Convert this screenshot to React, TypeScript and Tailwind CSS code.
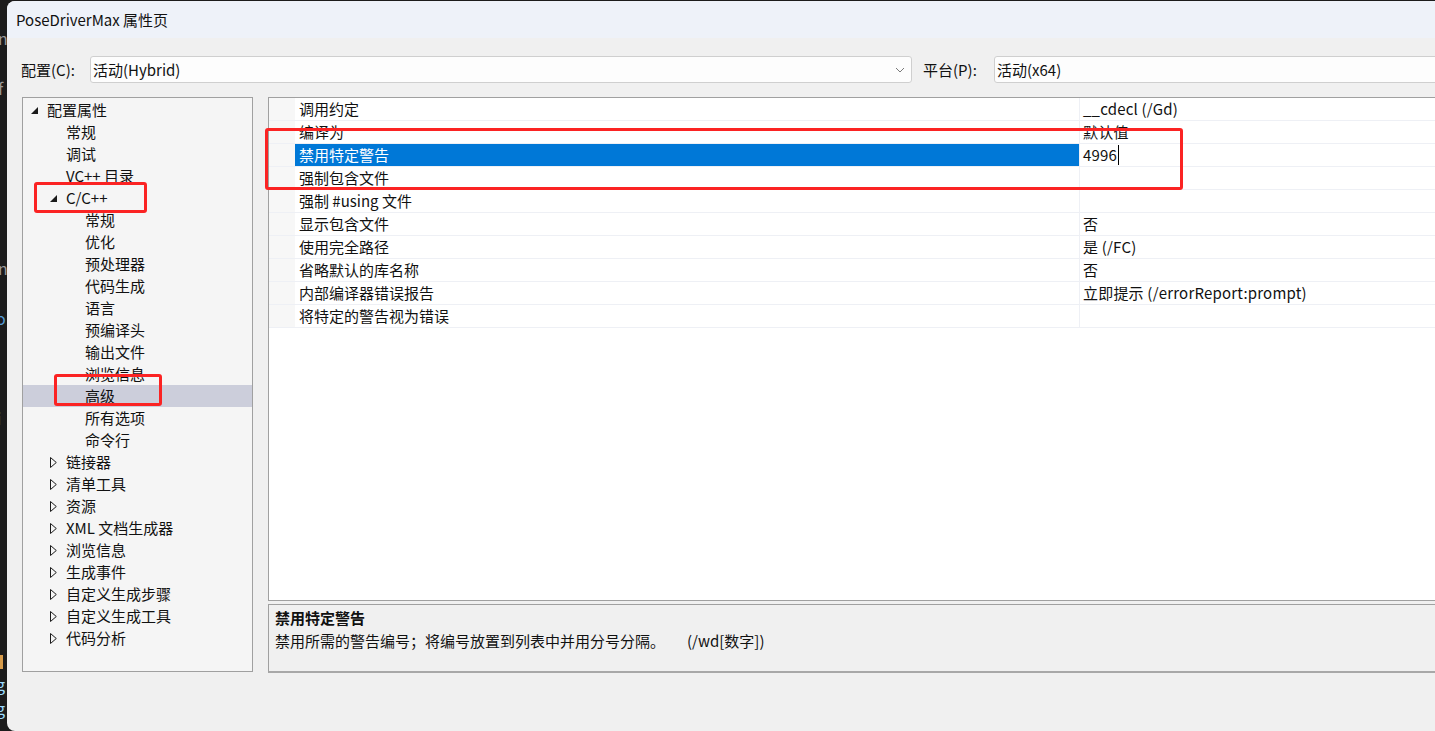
import React from "react";

type TreeItem = {
  label: string;
  level: number;
  arrow?: "open" | "closed";
  selected?: boolean;
};

const tree: TreeItem[] = [
  { label: "配置属性", level: 0, arrow: "open" },
  { label: "常规", level: 1 },
  { label: "调试", level: 1 },
  { label: "VC++ 目录", level: 1 },
  { label: "C/C++", level: 1, arrow: "open" },
  { label: "常规", level: 2 },
  { label: "优化", level: 2 },
  { label: "预处理器", level: 2 },
  { label: "代码生成", level: 2 },
  { label: "语言", level: 2 },
  { label: "预编译头", level: 2 },
  { label: "输出文件", level: 2 },
  { label: "浏览信息", level: 2 },
  { label: "高级", level: 2, selected: true },
  { label: "所有选项", level: 2 },
  { label: "命令行", level: 2 },
  { label: "链接器", level: 1, arrow: "closed" },
  { label: "清单工具", level: 1, arrow: "closed" },
  { label: "资源", level: 1, arrow: "closed" },
  { label: "XML 文档生成器", level: 1, arrow: "closed" },
  { label: "浏览信息", level: 1, arrow: "closed" },
  { label: "生成事件", level: 1, arrow: "closed" },
  { label: "自定义生成步骤", level: 1, arrow: "closed" },
  { label: "自定义生成工具", level: 1, arrow: "closed" },
  { label: "代码分析", level: 1, arrow: "closed" },
];

const props: { name: string; value: string; selected?: boolean }[] = [
  { name: "调用约定", value: "__cdecl (/Gd)" },
  { name: "编译为", value: "默认值" },
  { name: "禁用特定警告", value: "4996", selected: true },
  { name: "强制包含文件", value: "" },
  { name: "强制 #using 文件", value: "" },
  { name: "显示包含文件", value: "否" },
  { name: "使用完全路径", value: "是 (/FC)" },
  { name: "省略默认的库名称", value: "否" },
  { name: "内部编译器错误报告", value: "立即提示 (/errorReport:prompt)" },
  { name: "将特定的警告视为错误", value: "" },
];

const indent = ["pl-[8px]", "pl-[27px]", "pl-[46px]"];

function Arrow({ kind }: { kind?: "open" | "closed" }) {
  if (kind === "open")
    return (
      <svg width="7" height="7" viewBox="0 0 7 7" className="mt-[1px]">
        <polygon points="7,0 7,7 0,7" fill="#1a1a1a" />
      </svg>
    );
  if (kind === "closed")
    return (
      <svg width="7" height="11" viewBox="0 0 7 11">
        <polygon points="0.5,0.5 6.3,5.5 0.5,10.5" fill="none" stroke="#1a1a1a" strokeWidth="1" />
      </svg>
    );
  return null;
}

function Combo({ value, chevron }: { value: string; chevron?: boolean }) {
  return (
    <div className="h-[27px] flex items-center bg-[#fdfdfd] border border-[#cfcfcf] rounded-[3px] pl-[2px] pr-[6px]">
      <span className="flex-1">{value}</span>
      {chevron && (
        <svg width="10" height="6" viewBox="0 0 10 6">
          <polyline points="1,1 5,5 9,1" fill="none" stroke="#7a7a7a" strokeWidth="1" />
        </svg>
      )}
    </div>
  );
}

export default function App() {
  return (
    <div
      className="relative w-[1435px] h-[731px] flex bg-[#1c1c1c] overflow-hidden text-[15px] leading-[22px] text-[#111]"
      style={{ fontFamily: '"Noto Sans CJK SC", "Noto Sans", sans-serif' }}
    >
      {/* editor behind the dialog */}
      <div className="w-[7px] shrink-0 relative text-[16px] leading-none">
        <span className="absolute left-[-2px] top-[30px] text-[#9a9a9a]">n</span>
        <span className="absolute left-[-2px] top-[80px] text-[#9a9a9a]">f</span>
        <span className="absolute left-[-2px] top-[260px] text-[#9a9a9a]">n</span>
        <span className="absolute left-[-4px] top-[310px] text-[#569cd6]">o</span>
        <span className="absolute left-[-3px] top-[410px] text-[#569cd6]">i</span>
        <div className="absolute left-0 top-[655px] w-[3px] h-[14px] bg-[#d79b4a]" />
        <span className="absolute left-[-4px] top-[676px] text-[#9cdcfe]">g</span>
        <span className="absolute left-[-4px] top-[700px] text-[#9cdcfe]">g</span>
      </div>

      <div className="flex-1 min-w-0 mt-[1px] rounded-l-[8px] overflow-hidden bg-[#f0f0f0] flex flex-col">
        <div className="h-[37px] shrink-0 bg-[#eef2f9] pl-[9px] flex items-center text-[15px]">
          PoseDriverMax 属性页
        </div>

        <div className="h-[59px] shrink-0 pt-[18px] pl-[14px] flex">
          <div className="w-[69px] shrink-0 h-[27px] flex items-center">配置(C):</div>
          <div className="w-[822px] shrink-0">
            <Combo value="活动(Hybrid)" chevron />
          </div>
          <div className="w-[82px] shrink-0 h-[27px] pl-[11px] flex items-center">平台(P):</div>
          <div className="w-[460px] shrink-0">
            <Combo value="活动(x64)" />
          </div>
        </div>

        <div className="flex pl-[15px] gap-[15px]">
          {/* tree */}
          <div className="w-[231px] h-[575px] shrink-0 border border-[#a0a0a0] bg-[#f5f5f5] pt-[1px]">
            {tree.map((t, i) => (
              <div
                key={i}
                className={`h-[22px] flex items-center ${indent[t.level]} ${t.selected ? "bg-[#cccedb]" : ""}`}
              >
                <div className="w-[16px] flex items-center">
                  <Arrow kind={t.arrow} />
                </div>
                <span>{t.label}</span>
              </div>
            ))}
          </div>

          {/* grid + description */}
          <div className="flex-1 flex flex-col gap-[3px]">
            <div className="h-[504px] border-y border-l border-[#a0a0a0] bg-white">
              {props.map((p, i) => (
                <div key={i} className="h-[23px] flex border-b border-[#eef0f5]">
                  <div className="w-[26px] shrink-0 bg-[#f7f7f7]" />
                  <div
                    className={`w-[785px] shrink-0 pl-[4px] flex items-center border-r border-[#eef0f5] ${
                      p.selected ? "bg-[#0078d7] text-white" : ""
                    }`}
                  >
                    {p.name}
                  </div>
                  <div className="flex-1 pl-[3px] flex items-center">
                    <span className="tracking-[0.2px]">{p.value}</span>
                    {p.selected && <span className="w-px h-[20px] bg-black ml-[1px]" />}
                  </div>
                </div>
              ))}
            </div>
            <div className="h-[69px] border-t border-l border-[#a0a0a0] border-b-2 border-b-[#a8a8a8] bg-[#f0f0f0] pl-[6px] pt-[2px]">
              <div className="font-bold leading-[21px]">禁用特定警告</div>
              <div className="leading-[25px]">
                禁用所需的警告编号；将编号放置到列表中并用分号分隔。<span className="ml-[22px]">(/wd[数字])</span>
              </div>
            </div>
          </div>
        </div>
      </div>

      {/* red annotation boxes */}
      <div className="absolute left-[265px] top-[128px] w-[918px] h-[62px] border-[3px] border-[#fb2323] rounded-[3px]" />
      <div className="absolute left-[34px] top-[182px] w-[113px] h-[31px] border-[3px] border-[#fb2323] rounded-[3px]" />
      <div className="absolute left-[54px] top-[374px] w-[108px] h-[32px] border-[3px] border-[#fb2323] rounded-[3px]" />
    </div>
  );
}
